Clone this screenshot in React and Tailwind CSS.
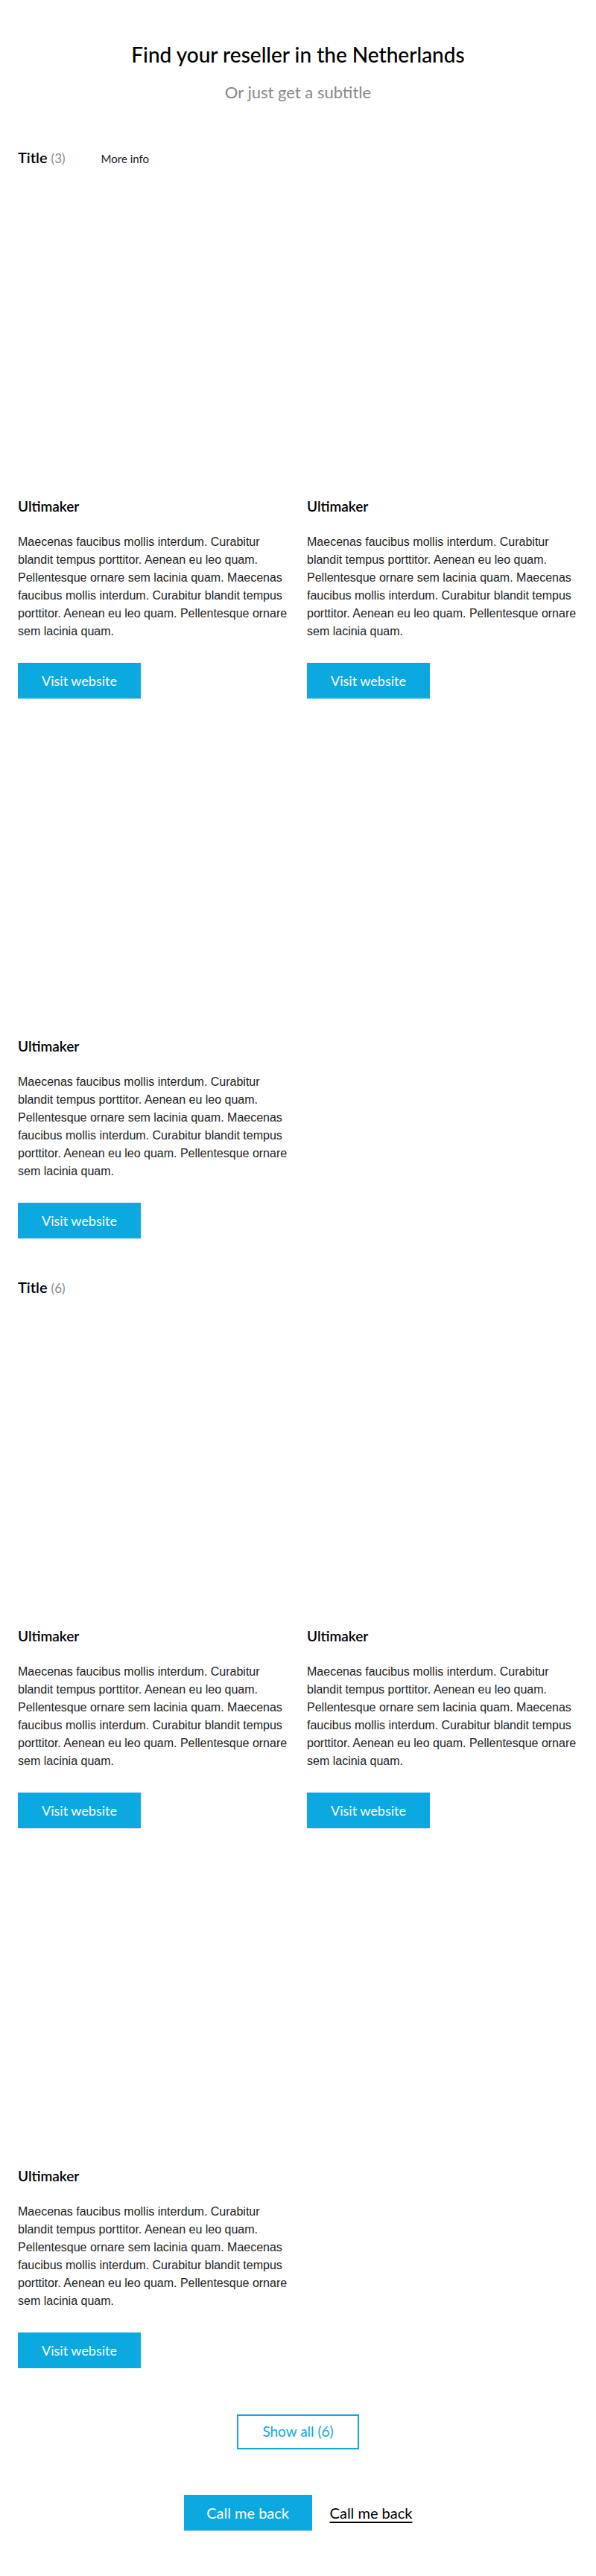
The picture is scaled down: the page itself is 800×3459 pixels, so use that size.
import React from 'react';

const BODY =
    'Maecenas faucibus mollis interdum. Curabitur blandit tempus porttitor. Aenean eu leo quam. Pellentesque ornare sem lacinia quam. Maecenas faucibus mollis interdum. Curabitur blandit tempus porttitor. Aenean eu leo quam. Pellentesque ornare sem lacinia quam.';

const ResellerCard = ({ name }) => (
    <div className="flex flex-col">
        {/* image placeholder (white) */}
        <div className="h-[384px] bg-white" />
        <h3 className="mt-6 text-[19px] leading-7 font-semibold text-black font-['Lato',sans-serif]">{name}</h3>
        <p className="mt-[22px] text-[16px] leading-6 text-[#222] font-['Liberation_Sans',Arial,sans-serif]">{BODY}</p>
        <div className="mt-[30px]">
            <a
                href="#"
                className="inline-flex items-center justify-center w-[165px] h-12 bg-[#0ca9e1] text-white text-[18px] font-['Lato',sans-serif]"
            >
                Visit website
            </a>
        </div>
    </div>
);

const Section = ({ title, count, moreInfo, cards }) => (
    <section>
        <div className="flex items-baseline h-7 leading-7 mb-[33px] font-['Lato',sans-serif]">
            <span className="text-[20px] font-semibold text-black">{title}</span>
            <span className="ml-[5px] text-[17px] text-[#888]">({count})</span>
            {moreInfo && <a href="#" className="ml-[48px] text-[15px] text-[#222]">More info</a>}
        </div>
        <div className="grid grid-cols-2 gap-x-6 gap-y-[45px]">
            {cards.map((c, i) => (
                <ResellerCard key={i} name={c} />
            ))}
        </div>
    </section>
);

export default function App() {
    return (
        <div className="bg-white min-h-screen px-6 pt-[55px] pb-[60px] font-['Lato',sans-serif]">
            {/* Header */}
            <div className="text-center">
                <h1 className="text-[28px] leading-9 font-medium text-black">Find your reseller in the Netherlands</h1>
                <p className="mt-[19px] text-[22px] leading-7 text-[#888]">Or just get a subtitle</p>
            </div>

            <div className="mt-[59px]">
                <Section title="Title" count={3} moreInfo cards={['Ultimaker', 'Ultimaker', 'Ultimaker']} />
            </div>

            <div className="mt-[51px]">
                <Section title="Title" count={6} cards={['Ultimaker', 'Ultimaker', 'Ultimaker']} />
            </div>

            <div className="mt-[62px] flex justify-center">
                <button className="w-[164px] h-[47px] border-2 border-[#0ca9e1] text-[#0ca9e1] text-[19px] bg-white">
                    Show all (6)
                </button>
            </div>

            <div className="mt-[61px] flex items-center justify-center gap-6">
                <button className="w-[172px] h-12 bg-[#0ca9e1] text-white text-[20px]">Call me back</button>
                <a href="#" className="text-[20px] text-black underline decoration-2 underline-offset-4">Call me back</a>
            </div>
        </div>
    );
}
